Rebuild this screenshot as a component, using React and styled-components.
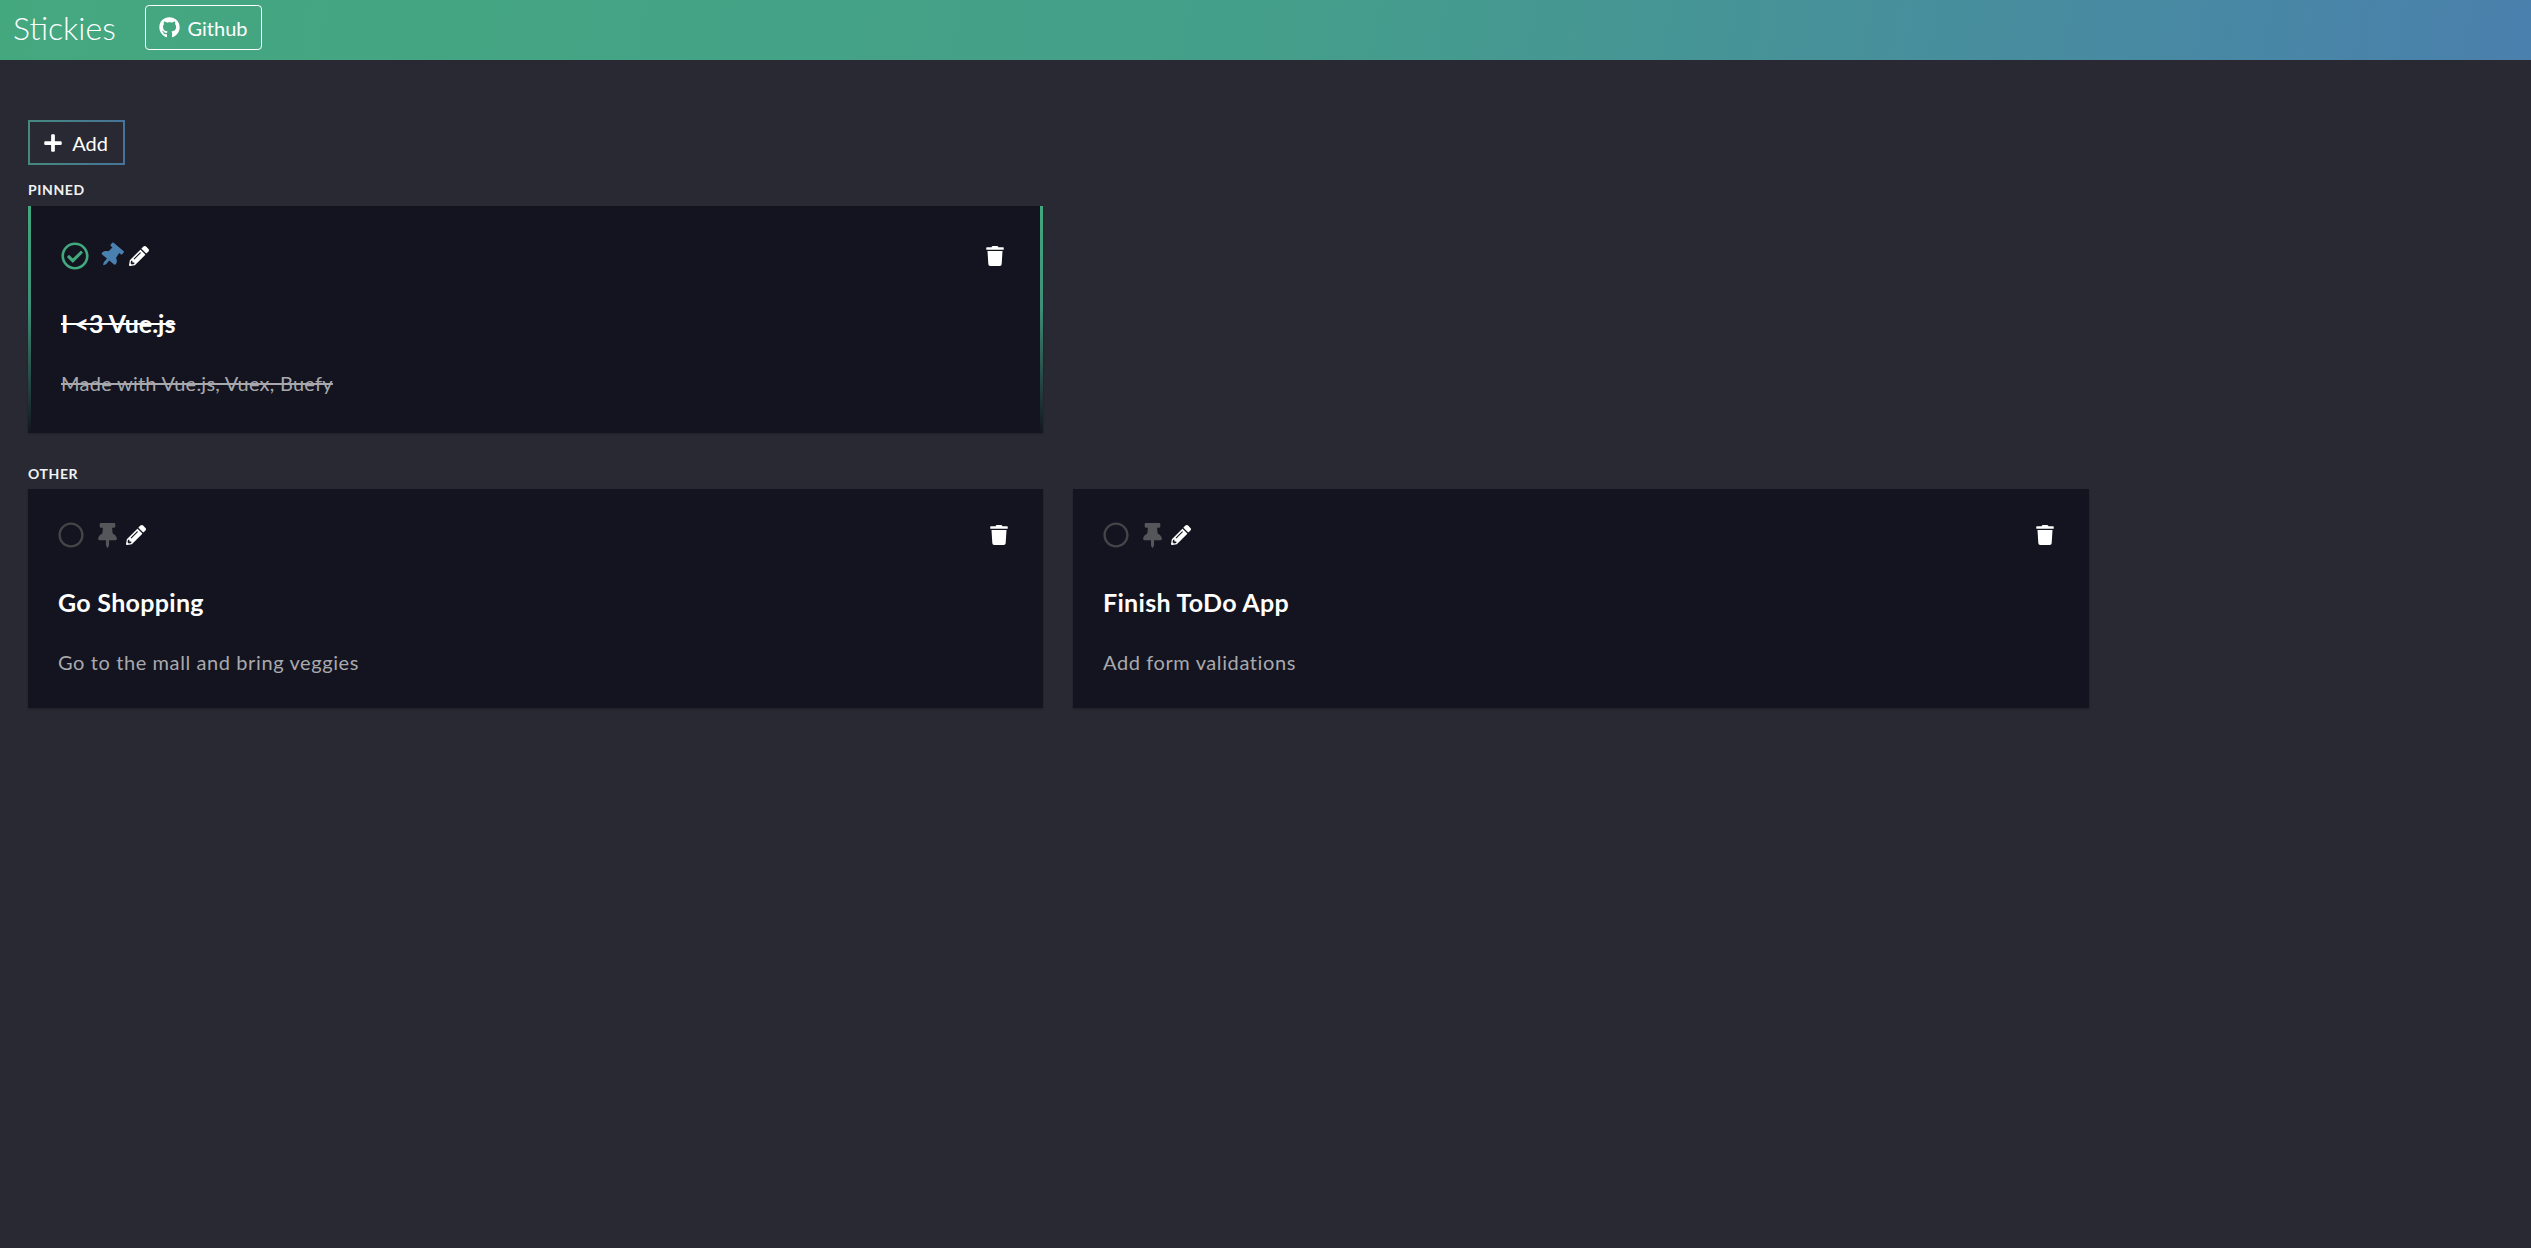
import React from "react";
import styled, { createGlobalStyle } from "styled-components";
import { FaGithub, FaPlus, FaThumbtack, FaPencilAlt, FaTrash, FaRegCircle, FaRegCheckCircle } from "react-icons/fa";

const Global = createGlobalStyle`
  html, body { margin: 0; padding: 0; background: #282933; overflow: hidden; }
  body { font-family: Lato, "Open Sans", sans-serif; color: #fff; }
`;
const Page = styled.div`
  min-height: 1248px;
  display: flex;
  flex-direction: column;
`;
const Navbar = styled.header`
  height: 60px;
  box-sizing: border-box;
  display: flex;
  align-items: center;
  padding: 0 0 5px 13px;
  background: linear-gradient(100deg, #44a87f 0%, #449f8a 50%, #4a80ad 100%);
`;
const Brand = styled.div`
  width: 132px;
  font-size: 32px;
  font-weight: 300;
  color: #fff;
`;
const GithubButton = styled.a`
  width: 117px;
  height: 45px;
  box-sizing: border-box;
  display: flex;
  align-items: center;
  justify-content: center;
  gap: 7px;
  border: 1px solid #fff;
  border-radius: 4px;
  font-size: 20px;
  font-weight: 400;
  color: #fff;
  svg { width: 21px; height: 21px; }
`;
const Main = styled.main`
  padding: 60px 0 0 28px;
  width: 2062px;
`;
const AddButton = styled.button`
  width: 97px;
  height: 45px;
  box-sizing: border-box;
  display: flex;
  align-items: center;
  justify-content: center;
  gap: 9px;
  background: transparent;
  border: 2px solid;
  border-image: linear-gradient(90deg, #45897f, #47739a) 1;
  color: #fff;
  font-family: inherit;
  font-size: 20px;
  font-weight: 400;
  padding: 0 2px 0 0;
  svg { width: 20px; height: 20px; }
`;
const SectionLabel = styled.div`
  font-size: 14px;
  font-weight: 700;
  letter-spacing: 0.6px;
  line-height: 17px;
  color: #f2f2f2;
  margin-top: ${(p) => p.$top}px;
  margin-bottom: ${(p) => p.$bottom}px;
`;
const Grid = styled.div`
  display: grid;
  grid-template-columns: 1015px 1016px;
  column-gap: 30px;
`;
const Card = styled.article`
  box-sizing: border-box;
  height: ${(p) => (p.$pinned ? 227 : 219)}px;
  background: #13141f;
  padding: ${(p) => (p.$pinned ? "33px 33px 0" : "29px 34px 0 30px")};
  position: relative;
  box-shadow: 0 1px 2px rgba(0, 0, 0, 0.25);
  ${(p) =>
    p.$pinned &&
    `border-left: 3px solid; border-right: 3px solid; padding-left: 30px; padding-right: 35px;
     border-image: linear-gradient(180deg, #42a97f 0%, #3f8f78 45%, #13141f 100%) 1;`}
`;
const Toolbar = styled.div`
  height: 34px;
  display: flex;
  align-items: center;
`;
const CheckSlot = styled.span`
  display: flex;
  font-size: ${(p) => (p.$done ? 28 : 26)}px;
  color: ${(p) => (p.$done ? "#42a97f" : "#444548")};
`;
const PinSlot = styled.span`
  display: flex;
  margin-left: ${(p) => (p.$pinned ? 10 : 11)}px;
  font-size: ${(p) => (p.$pinned ? 24 : 25)}px;
  color: ${(p) => (p.$pinned ? "#4a80b0" : "#55565a")};
  svg { transform: ${(p) => (p.$pinned ? "rotate(40deg)" : "none")}; }
`;
const EditSlot = styled.span`
  display: flex;
  margin-left: ${(p) => (p.$pinned ? 6 : 6)}px;
  font-size: 20px;
  color: #fff;
`;
const TrashSlot = styled.span`
  display: flex;
  margin-left: auto;
  font-size: 20px;
  color: #fff;
`;
const Title = styled.h2`
  margin: 35px 0 0;
  font-size: 25px;
  line-height: 30px;
  font-weight: 700;
  color: #fff;
  letter-spacing: ${(p) => (p.$done ? 0 : 0.3)}px;
  text-decoration: ${(p) => (p.$done ? "line-through" : "none")};
`;
const Desc = styled.p`
  margin: 33px 0 0;
  font-size: 20px;
  line-height: 24px;
  font-weight: 400;
  color: #a9a9ad;
  letter-spacing: ${(p) => (p.$done ? 0.25 : 0.6)}px;
  text-decoration: ${(p) => (p.$done ? "line-through" : "none")};
`;

function Sticky({ title, desc, pinned, done }) {
  return (
    <Card $pinned={pinned}>
      <Toolbar>
        <CheckSlot $done={done}>{done ? <FaRegCheckCircle /> : <FaRegCircle />}</CheckSlot>
        <PinSlot $pinned={pinned}><FaThumbtack /></PinSlot>
        <EditSlot $pinned={pinned}><FaPencilAlt /></EditSlot>
        <TrashSlot><FaTrash /></TrashSlot>
      </Toolbar>
      <Title $done={done}>{title}</Title>
      <Desc $done={done}>{desc}</Desc>
    </Card>
  );
}

export default function App() {
  return (
    <Page>
      <Global />
      <Navbar>
        <Brand>Stickies</Brand>
        <GithubButton><FaGithub />Github</GithubButton>
      </Navbar>
      <Main>
        <AddButton><FaPlus />Add</AddButton>
        <SectionLabel $top={16} $bottom={8}>PINNED</SectionLabel>
        <Grid>
          <Sticky pinned done title="I <3 Vue.js" desc="Made with Vue.js, Vuex, Buefy" />
        </Grid>
        <SectionLabel $top={32} $bottom={7}>OTHER</SectionLabel>
        <Grid>
          <Sticky title="Go Shopping" desc="Go to the mall and bring veggies" />
          <Sticky title="Finish ToDo App" desc="Add form validations" />
        </Grid>
      </Main>
    </Page>
  );
}
